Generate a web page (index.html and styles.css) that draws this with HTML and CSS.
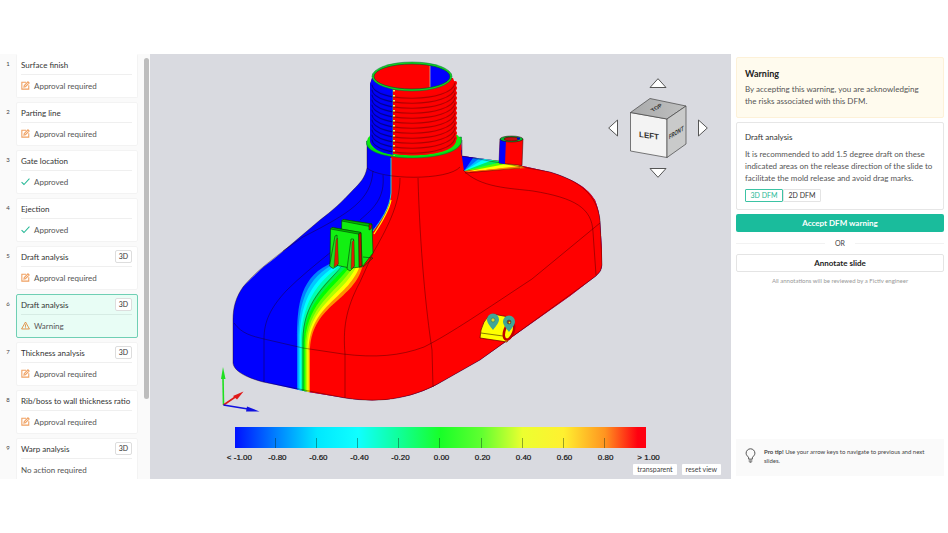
FILE: index.html
```html
<!DOCTYPE html>
<html lang="en">
<head>
<meta charset="utf-8">
<title>DFM review</title>
<link rel="stylesheet" href="styles.css">
</head>
<body>
<svg class="defs" aria-hidden="true">
  <symbol id="edit" viewBox="0 0 16 16"><path d="M9 2.2H1.5v12.3h12.3V7.5M5.2 10.8l.6-2.7 6.6-6.6 2.1 2.1-6.6 6.6z" fill="none" stroke="currentColor" stroke-width="1.9"/></symbol>
  <symbol id="check" viewBox="0 0 16 16"><path d="M1 9l4.3 4.3L15 3" fill="none" stroke="currentColor" stroke-width="1.8"/></symbol>
  <symbol id="warn" viewBox="0 0 16 16"><path d="M8 1.8L15 14.2H1z" fill="none" stroke="currentColor" stroke-width="1.6" stroke-linejoin="round"/><path d="M8 6v4.4M8 11.4v1.5" stroke="currentColor" stroke-width="1.6"/></symbol>
</svg>
<main class="app">
  <nav class="sidebar" aria-label="Slides">
    <ol class="slides">
      <li class="slide"><span class="num">1</span><div class="card"><div class="title">Surface finish</div><div class="status todo"><svg><use href="#edit"/></svg><span>Approval required</span></div></div></li>
      <li class="slide"><span class="num">2</span><div class="card"><div class="title">Parting line</div><div class="status todo"><svg><use href="#edit"/></svg><span>Approval required</span></div></div></li>
      <li class="slide"><span class="num">3</span><div class="card"><div class="title">Gate location</div><div class="status done"><svg><use href="#check"/></svg><span>Approved</span></div></div></li>
      <li class="slide"><span class="num">4</span><div class="card"><div class="title">Ejection</div><div class="status done"><svg><use href="#check"/></svg><span>Approved</span></div></div></li>
      <li class="slide"><span class="num">5</span><div class="card"><div class="title">Draft analysis<span class="tag">3D</span></div><div class="status todo"><svg><use href="#edit"/></svg><span>Approval required</span></div></div></li>
      <li class="slide"><span class="num">6</span><div class="card active"><div class="title">Draft analysis<span class="tag">3D</span></div><div class="status alert"><svg><use href="#warn"/></svg><span>Warning</span></div></div></li>
      <li class="slide"><span class="num">7</span><div class="card"><div class="title">Thickness analysis<span class="tag">3D</span></div><div class="status todo"><svg><use href="#edit"/></svg><span>Approval required</span></div></div></li>
      <li class="slide"><span class="num">8</span><div class="card"><div class="title">Rib/boss to wall thickness ratio</div><div class="status todo"><svg><use href="#edit"/></svg><span>Approval required</span></div></div></li>
      <li class="slide"><span class="num">9</span><div class="card"><div class="title">Warp analysis<span class="tag">3D</span></div><div class="status"><span>No action required</span></div></div></li>
    </ol>
    <div class="track"><div class="thumb"></div></div>
  </nav>

  <section class="viewer" aria-label="3D viewer">
    <svg class="scene" viewBox="150 54 581 425" aria-hidden="true">
      <defs>
        <clipPath id="body"><path d="M367 141V168C365 178 360 183 353 190C342 202 332 211 320 220L287 248C278 256 268 263 260 270C253 277 247 282 243 287C236 297 233 307 233 320V363C234 371 245 377 263 382L308 392L345 398C365 401 380 401 397 398C408 396 415 394 423 391C430 388 437 385 443 381L480 360L570 296L596 276Q602 271 602 265V250L600 220C599 211 597 205 595 200C591 194 588 191 583 187C573 180 563 176 550 172L523 166L500 161L462 156L461 138Z"/></clipPath>
        <clipPath id="mouth"><ellipse cx="412" cy="76.500" rx="38" ry="12.500"/></clipPath>
        <clipPath id="leftHalf"><path d="M360 60H393V170H360Z"/></clipPath>
        <clipPath id="rightHalf"><path d="M393 60H470V170H393Z"/></clipPath>
        <clipPath id="shaft"><path d="M366 78H460V142A46.500 15 0 0 1 367 142Z"/></clipPath>
        <filter id="soft" x="-5%" y="-5%" width="110%" height="110%"><feGaussianBlur stdDeviation=".7"/></filter>
        <path id="ridge" d="M372 84C374 102 452 102 455 82"/>
        <g id="ridges">
          <use href="#ridge" y="1"/><use href="#ridge" y="6"/><use href="#ridge" y="11"/><use href="#ridge" y="16"/><use href="#ridge" y="21"/><use href="#ridge" y="26"/><use href="#ridge" y="31"/><use href="#ridge" y="36"/><use href="#ridge" y="41"/><use href="#ridge" y="46"/><use href="#ridge" y="51"/><use href="#ridge" y="56"/>
        </g>
        <linearGradient id="top" x1="0" x2="1"><stop offset="0" stop-color="#a9aaab"/><stop offset="1" stop-color="#bfc0c0"/></linearGradient>
      </defs>

      <g clip-path="url(#body)">
        <path fill="#00f" d="M220 120H620V410H220Z"/>
        <path fill="#f00" d="M391 130V193C390 208 381 220 373 232L362 268V410H620V120H391Z"/>
        <g filter="url(#soft)">
          <path fill="#0080ff" d="M370 240L334 262C300 275 297 305 297 340V402H390V240Z"/>
          <path fill="#00c8ff" d="M370 240L336.800 262.600C305.200 277.700 298.300 305 298.300 341V402H390V240Z"/>
          <path fill="#0ff" d="M370 240L339.600 263.200C310.400 280.400 299.600 305 299.600 342V402H390V240Z"/>
          <path fill="#00ffb0" d="M370 240L342.400 263.800C315.600 283.100 300.900 305 300.900 344V402H390V240Z"/>
          <path fill="#00f050" d="M370 240L345.200 264.400C320.800 285.800 302.200 305 302.200 345V402H390V240Z"/>
          <path fill="#0f0" d="M370 240L348 265C326 288.500 303.500 305 303.500 346V402H390V240Z"/>
          <path fill="#60ff00" d="M370 240L350.800 265.600C331.200 291.200 304.800 305 304.800 348V402H390V240Z"/>
          <path fill="#b0ff00" d="M370 240L353.600 266.200C336.400 293.900 306.100 305 306.100 349V402H390V240Z"/>
          <path fill="#ff0" d="M370 240L356.400 266.800C341.600 296.600 307.400 305 307.400 350V402H390V240Z"/>
          <path fill="#ff9000" d="M370 240L359.200 267.400C346.800 299.300 308.700 305 308.700 352V402H390V240Z"/>
          <path fill="#f00" d="M374 228L362 268C352 302 310 305 310 353V402H394V228Z"/>
        </g>
        <path d="M391 158V193C390 208 381 220 373 231" fill="none" stroke="#18d8d0" stroke-width="1"/>
        <path d="M391 200C389 211 382 222 374 234" fill="none" stroke="#ff0" stroke-width="1.200"/>
        <g filter="url(#soft)">
          <path fill="#00f" d="M464 171L461 150L480 156Z"/><path fill="#0070ff" d="M464 171L475 155L487 158Z"/><path fill="#00c0ff" d="M464 171L482 156L496 160Z"/>
          <path fill="#0ff" d="M464 171L489 156L503 160Z"/><path fill="#00f060" d="M464 171L498 158L512 163Z"/><path fill="#50ff00" d="M464 171L506 161L517 165Z"/>
          <path fill="#ff0" d="M464 172L511 163L523 166.500Z"/><path fill="#ff8000" d="M464 172.500L520 166L526 168Z"/>
        </g>
      </g>

      <g fill="none" stroke="#200" stroke-opacity=".55" stroke-width=".7">
        <path d="M234 323C242 334 252 336 264 339L303 348L343 354C375 358 400 356 424 347C450 334 485 310 532 279L600 223"/>
        <path d="M264 382V339C264 322 270 308 287 290C300 277 315 265 331 252"/>
        <path d="M343 265C324 287 303 303 303 340V391"/>
        <path d="M345 398V354C343 330 345 310 360 282L373 253C386 230 400 205 400 178"/>
        <path d="M433 387L432 350C426 310 420 250 418 178"/>
        <path d="M367 168C380 180 448 181 460 167"/>
        <path d="M373 171C371 200 350 213 303 237L283 251"/>
        <path d="M383 175C385 198 374 208 360 220"/>
        <path d="M463 170C480 188 510 188 533 191C575 198 592 208 593 232L596 275M465 173L520 168"/>
        <path d="M367 141V168C365 178 360 183 353 190C342 202 332 211 320 220L287 248C268 263 255 272 243 287C236 297 233 307 233 320V363C234 371 245 377 263 382L345 398C385 404 415 397 443 381L480 360L596 276Q602 271 602 265L600 220C597 195 580 181 550 172L462 156V140"/>
      </g>

      <path fill="#0d1" d="M366.500 141V144C370 163 457 163 461.500 142V137Z" stroke="#064" stroke-width=".5"/>
      <ellipse cx="414" cy="141" rx="47" ry="15" fill="#11e611"/>
      <g clip-path="url(#shaft)">
        <path fill="#f00" d="M372 78H453L456 86V141C454 160 372 160 370 141V84Z"/>
        <path fill="#00f" d="M372 78H393V155C380 153 371 148 370 141V84Z"/>
        <g fill="none" stroke-linecap="round">
          <g clip-path="url(#leftHalf)"><use href="#ridges" stroke="#0000f5" stroke-width="4"/><use href="#ridges" stroke="#000090" stroke-width="1.200"/></g>
          <g clip-path="url(#rightHalf)"><use href="#ridges" stroke="#fb0000" stroke-width="4"/><use href="#ridges" stroke="#b00000" stroke-width="1.200"/></g>
        </g>
        <path d="M394 90V156" stroke="#d8ff60" stroke-width="2" stroke-dasharray="1.500 3.500"/>
        <path d="M392.500 89V156" stroke="#3060a0" stroke-width=".6"/>
      </g>
      <ellipse cx="412" cy="76.500" rx="40" ry="14.500" fill="#14d81c" stroke="#064" stroke-width=".5"/>
      <g clip-path="url(#mouth)"><path fill="#f00" d="M370 60H430V95H370Z"/><path fill="#00f" d="M430 60H455V95H430Z"/><path d="M430 60V95" stroke="#c8b090" stroke-width=".8"/></g>
      <ellipse cx="412" cy="76.500" rx="38" ry="12.500" fill="none" stroke="#043" stroke-width=".6"/>

      <g stroke="#300" stroke-width=".5">
        <path fill="#f00" d="M500 139L499 163L522 165.500L523 139Z"/>
        <path fill="#00f" stroke="none" d="M500 139L499 163L505 164L506 139Z"/>
        <ellipse cx="511.500" cy="139" rx="11.500" ry="3" fill="#0b3"/>
        <ellipse cx="511.500" cy="139" rx="7.500" ry="2" fill="#c01010"/>
        <path d="M517 138.500h3" stroke="#00c" stroke-width="2"/>
      </g>

      <g stroke="#053a05" stroke-width=".6" stroke-linejoin="round">
        <path fill="#10ee10" d="M341.700 221L343 219.500L372 224L373 253L363 266L350 267L341 262Z"/>
        <path fill="#0b0" d="M341.700 221L343 219.500L372 224L370 226.500Z"/>
        <path fill="#d00" d="M369 224.500L372 225L371 229L369 230Z"/>
        <path fill="none" d="M363 257L373 258L363 267"/>
        <path fill="#12f012" d="M330.500 229L332 227.500L361 232.500L362 267L350 268L330 264Z"/>
        <path fill="#0b0" d="M330.500 229L332 227.500L361 232.500L358 234Z"/>
        <path fill="#c01000" d="M358.500 234L361 233L362 266L359 267Z"/>
        <path fill="#20e020" d="M335 236L337 235L337.500 266L333 268.500L329.500 266Z"/>
        <path fill="#e02000" d="M336 240L337.500 238L338.500 264L334 267Z" stroke-width=".3"/>
        <path fill="#20e020" d="M351 239L353.500 239L354 267L350 271L347 269Z"/>
        <path fill="#e02000" d="M352 242L354 240L354.500 266L351 269Z" stroke-width=".3"/>
      </g>

      <path d="M484 322Q488 315 493 314L514 318L515 328L507 342L480 338Q480 330 484 322Z" fill="#ff0" stroke="#700" stroke-width=".8"/>
      <path d="M481 333L503 336" stroke="#540" stroke-width=".7"/>
      <path d="M508 315L518 319L518 331L512 336Z" fill="#f00"/>
      <ellipse cx="509" cy="331" rx="4.500" ry="9" transform="rotate(20 509 331)" fill="#ff0" stroke="#c00000" stroke-width="2.500"/>
      <path id="pin" d="M493 330C490 326 487 323 487 319.500A6 6 0 0 1 499 319.500C499 323 496 326 493 330Z" fill="#40a596"/>
      <use href="#pin" x="16" y="2"/>
      <circle cx="493" cy="320" r="2" fill="#d9d930" stroke="#276" stroke-width=".6"/>
      <circle cx="509" cy="322" r="2" fill="#a33a10" stroke="#255" stroke-width=".6"/><circle cx="509.500" cy="322.600" r=".8" fill="#ff0"/>

      <g stroke-width="1.600">
        <path d="M223.500 405L223 378" stroke="#1fe01f"/><path d="M221 379L223 367L225.500 379Z" fill="#1fe01f"/>
        <path d="M223.500 405L236 396.500" stroke="#e01818"/><path d="M233 396L243.500 391.500L237 399.500Z" fill="#e01818"/>
        <path d="M223.500 405L248 409" stroke="#1010e0"/><path d="M247 406.500L259.500 411.500L246 411.500Z" fill="#1010e0"/>
      </g>
    </svg>

    <div class="navcube">
      <button class="turn up" aria-label="Rotate up"><svg viewBox="0 0 18 10"><path d="M1 9.500L9 .7L17 9.500Z"/></svg></button>
      <button class="turn left" aria-label="Rotate left"><svg viewBox="0 0 10 18"><path d="M9.500 1L.7 9L9.500 17Z"/></svg></button>
      <svg class="cube" viewBox="626 88 64 80">
        <g stroke="#444" stroke-width=".7" stroke-linejoin="round">
          <path fill="#f3f3f3" d="M630.500 112.500L667 119L667 157.500L630.500 151Z"/>
          <path fill="url(#top)" d="M630.500 112.500L650 98.500L686 106L667 119Z"/>
          <path fill="#c9caca" d="M667 119L686 106V144L667 157.500Z"/>
        </g>
        <text class="face" transform="matrix(1 .13 0 1 639 137)">LEFT</text>
        <text class="face side" transform="matrix(.6 -.38 0 1 669 139.500)">FRONT</text>
        <text class="face side" transform="matrix(.7 -.44 .6 .5 653 112)">TOP</text>
      </svg>
      <button class="turn right" aria-label="Rotate right"><svg viewBox="0 0 10 18"><path d="M.5 1L9.300 9L.5 17Z"/></svg></button>
      <button class="turn down" aria-label="Rotate down"><svg viewBox="0 0 18 10"><path d="M1 .5L9 9.300L17 .5Z"/></svg></button>
    </div>

    <div class="legend">
      <div class="bar"><i></i><i></i><i></i><i></i><i></i><i></i><i></i><i></i><i></i><i></i></div>
      <div class="scale"><span>&lt; -1.00</span><span>-0.80</span><span>-0.60</span><span>-0.40</span><span>-0.20</span><span>0.00</span><span>0.20</span><span>0.40</span><span>0.60</span><span>0.80</span><span>&gt; 1.00</span></div>
    </div>
    <div class="tools"><button>transparent</button><button>reset view</button></div>
  </section>

  <aside class="panel">
    <section class="notice">
      <h2>Warning</h2>
      <p>By accepting this warning, you are acknowledging the risks associated with this DFM.</p>
    </section>
    <section class="detail">
      <h3>Draft analysis</h3>
      <p>It is recommended to add 1.5 degree draft on these indicated areas on the release direction of the slide to facilitate the mold release and avoid drag marks.</p>
      <div class="toggle"><button class="on">3D DFM</button><button>2D DFM</button></div>
    </section>
    <button class="accept">Accept DFM warning</button>
    <div class="or">OR</div>
    <button class="annotate">Annotate slide</button>
    <p class="note">All annotations will be reviewed by a Fictiv engineer</p>
    <div class="tip">
      <svg viewBox="0 0 12 16"><path d="M4 12V10.500C3.500 9 1.200 8 1.200 5.500A4.800 4.800 0 0 1 10.800 5.500C10.800 8 8.500 9 8 10.500V12ZM4 14H8M5 15.300H7" fill="none" stroke="#444" stroke-width="1"/></svg>
      <p><b>Pro tip!</b> Use your arrow keys to navigate to previous and next slides.</p>
    </div>
  </aside>
</main>
</body>
</html>
```
FILE: styles.css
```css
* { box-sizing: border-box; }
body { margin: 0; padding: 54px 0; background: #fff; color: #444; font: 8px/12px Lato, "Open Sans", sans-serif; }
h2, h3, p, ol { margin: 0; padding: 0; }
button { font: inherit; color: inherit; padding: 0; border: 0; background: none; cursor: pointer; }
.defs { position: absolute; width: 0; height: 0; }

.app { display: grid; grid-template-columns: 150px 1fr 217px; height: calc(100vh - 108px); min-height: 425px; }

.sidebar { display: grid; grid-template-columns: 1fr 6px; column-gap: 6px; background: #fafafa; overflow: hidden; min-height: 0; }
.slides { list-style: none; display: flex; flex-direction: column; gap: 4px; overflow: hidden; min-height: 0; }
.slide { display: grid; grid-template-columns: 16px 1fr; flex: none; height: 44px; }
.num { font-size: 6px; line-height: 20px; text-align: center; color: #444; }
.card { border: 1px solid #f3f3f3; border-radius: 2px; background: #fff; padding: 0 5px 0 4px; }
.slide:first-child .card { border-top-color: #fff; }
.card.active { border-color: #6fcfb4; background: #e8fdf5; }
.title { display: flex; align-items: center; justify-content: space-between; height: 20px; border-bottom: 1px solid #efefef; white-space: nowrap; color: #333; }
.active .title { border-color: #d6ece4; }
.tag { width: 17px; height: 13px; border: 1px solid #ddd; border-radius: 2px; background: #fff; text-align: center; font-size: 7px; line-height: 11px; }
.status { display: flex; align-items: center; gap: 4px; height: 21px; color: #555; }
.status svg { width: 9px; height: 9px; }
.todo svg { color: #f0a060; }
.done svg { color: #25b896; }
.alert svg { color: #e08a3c; }
.track { padding-top: 4px; }
.thumb { width: 5px; height: 81%; border-radius: 3px; background: #bdbdbd; }

.viewer { position: relative; display: flex; flex-direction: column; justify-content: flex-end; background: #d9dae0; overflow: hidden; }
.scene { position: absolute; inset: 0; width: 100%; height: 100%; }
.navcube { position: absolute; top: 24px; right: 23px; display: grid; grid-template: 10px 80px 10px / 10px 80px 10px; align-items: center; justify-items: center; }
.turn { display: block; line-height: 0; }
.turn path { fill: #fff; stroke: #555; stroke-width: 1; }
.up, .down { grid-column: 2; }
.left, .right { grid-row: 2; }
.up svg, .down svg { width: 18px; height: 10px; }
.left svg, .right svg { width: 10px; height: 18px; }
.cube { grid-area: 2 / 2; width: 64px; height: 80px; }
.face { font: bold 8px "Liberation Sans", sans-serif; fill: #333; }
.side { font-size: 7px; }
.legend { position: relative; align-self: center; width: 78%; }
.bar { display: grid; grid-template-columns: repeat(10, 1fr); align-items: end; height: 21px; margin: 0 calc(100% / 22); background: linear-gradient(90deg, #0010ff, #0080ff 10%, #00e8ff 20%, #10ffff 30%, #10ff98 40%, #18ff28 50%, #60ff30 60%, #ecff30 70%, #fff030 80%, #ff9420 90%, #ff0010 98%); }
.bar i { height: 10px; border-right: 1px solid rgba(0, 40, 20, .4); }
.bar i:last-child { border: 0; }
.scale { display: grid; grid-template-columns: repeat(11, 1fr); padding-left: 2px; text-align: center; font: 8px/20px "Liberation Sans", sans-serif; color: #111; -webkit-text-stroke: .2px #111; }
.scale span:first-child { padding-left: 6px; }
.scale span:last-child { padding-left: 4px; }
.tools { position: relative; display: flex; justify-content: flex-end; gap: 5px; padding: 0 10px 4px 0; margin-top: -4px; }
.tools button { height: 11px; padding: 0 4px; border-radius: 1px; background: #fff; font-size: 7px; line-height: 11px; color: #444; }

.panel { display: flex; flex-direction: column; padding: 3px 4px 3px 5px; }
.notice { padding: 10px 16px 10px 8px; border: 1px solid #fdf1d8; border-radius: 2px; background: #fffbee; color: #555; }
.notice h2 { margin-bottom: 3px; font-size: 9px; line-height: 12px; color: #222; }
.detail { margin-top: 4px; padding: 8px 8px 7px; border: 1px solid #e6e6e6; border-radius: 2px; color: #555; }
.detail h3 { margin-bottom: 5px; font-size: 8px; font-weight: 400; color: #333; }
.toggle { display: flex; margin-top: 5px; }
.toggle button { height: 13px; width: 38px; border: 1px solid #e4e4e4; border-radius: 1px; font-size: 7px; line-height: 11px; color: #333; }
.toggle .on { border-color: #3cc3a4; color: #25b896; }
.accept, .annotate { height: 18px; border-radius: 2px; font-weight: 700; }
.accept { margin-top: 4px; background: #1abc9c; color: #fff; }
.or { display: flex; align-items: center; gap: 10px; height: 22px; font-size: 7px; }
.or::before, .or::after { content: ""; flex: 1; border-top: 1px solid #f2f2f2; }
.annotate { border: 1px solid #e4e4e4; color: #222; }
.note { margin-top: 3px; text-align: center; font-size: 6px; color: #999; }
.tip { display: flex; align-items: center; gap: 8px; margin-top: auto; padding: 0 8px 4px 9px; height: 37px; background: #fafafa; }
.tip svg { width: 11px; height: 15px; flex: none; }
.tip p { font-size: 6px; line-height: 9px; }
```
